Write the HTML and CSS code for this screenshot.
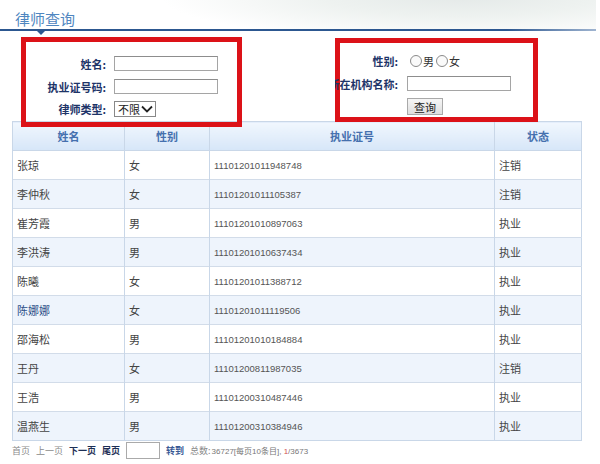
FILE: index.html
```html
<!DOCTYPE html>
<html lang="zh-CN">
<head>
    <meta charset="UTF-8">
    <title>律师查询</title>
    <link rel="stylesheet" href="styles.css">
</head>
<body>
    <div class="title-bar">
        <h1>律师查询</h1>
        <span class="marker"></span>
    </div>

    <div class="search">
        <div class="group group-left">
            <div class="row">
                <label>姓名:</label>
                <input type="text" class="text-input">
            </div>
            <div class="row">
                <label>执业证号码:</label>
                <input type="text" class="text-input">
            </div>
            <div class="row">
                <label>律师类型:</label>
                <span class="type-select">
                    <span>不限</span>
                    <svg width="12" height="8" viewBox="0 0 12 8"><path d="M1 1.5 L6 6.5 L11 1.5" fill="none" stroke="#222" stroke-width="1.8"/></svg>
                </span>
            </div>
        </div>
        <div class="group group-right">
            <div class="row">
                <label>性别:</label>
                <span class="radio"><i></i>男</span>
                <span class="radio"><i></i>女</span>
            </div>
            <div class="row">
                <label>所在机构名称:</label>
                <input type="text" class="text-input">
            </div>
            <div class="row">
                <label></label>
                <button class="btn">查询</button>
            </div>
        </div>
    </div>

    <table class="result">
        <thead>
            <tr>
                <th class="c-name">姓名</th>
                <th class="c-sex">性别</th>
                <th class="c-no">执业证号</th>
                <th class="c-state">状态</th>
            </tr>
        </thead>
        <tbody>
            <tr><td>张琼</td><td>女</td><td class="num">11101201011948748</td><td>注销</td></tr>
            <tr><td>李仲秋</td><td>女</td><td class="num">11101201011105387</td><td>注销</td></tr>
            <tr><td>崔芳霞</td><td>男</td><td class="num">11101201010897063</td><td>执业</td></tr>
            <tr><td>李洪涛</td><td>男</td><td class="num">11101201010637434</td><td>执业</td></tr>
            <tr><td>陈曦</td><td>女</td><td class="num">11101201011388712</td><td>执业</td></tr>
            <tr><td class="link">陈娜娜</td><td>女</td><td class="num">11101201011119506</td><td>执业</td></tr>
            <tr><td>邵海松</td><td>男</td><td class="num">11101201010184884</td><td>执业</td></tr>
            <tr><td>王丹</td><td>女</td><td class="num">11101200811987035</td><td>注销</td></tr>
            <tr><td>王浩</td><td>男</td><td class="num">11101200310487446</td><td>执业</td></tr>
            <tr><td>温燕生</td><td>男</td><td class="num">11101200310384946</td><td>执业</td></tr>
        </tbody>
    </table>

    <div class="pager">
        <span class="off">首页</span>
        <span class="off">上一页</span>
        <a class="on">下一页</a>
        <a class="on">尾页</a>
        <input type="text" class="page-input">
        <a class="go">转到</a>
        <span class="off total">总数:</span><span class="info">36727[每页10条目], <em>1</em>/3673</span>
    </div>
</body>
</html>
```

FILE: styles.css
```css
body {
    margin: 0;
    width: 600px;
    height: 464px;
    overflow: hidden;
    font-family: "Noto Sans CJK SC", "Liberation Sans", sans-serif;
    font-size: 11px;
    color: #444;
    background: #fff;
}

.title-bar {
    position: relative;
    height: 31px;
    padding-left: 15px;
    margin-right: 4px;
    background:
        radial-gradient(ellipse 300px 46px at 460px -4px, #e4e9e8 0%, #eef2f0 45%, rgba(255,255,255,0) 100%);
}

.title-bar::after {
    content: "";
    position: absolute;
    left: 0;
    right: 0;
    bottom: 0;
    height: 2px;
    background: linear-gradient(to right, #2c5790 0%, #2c5790 85%, #9fb4d0 100%);
}

.title-bar h1 {
    margin: 0;
    padding-top: 10px;
    font-size: 15px;
    font-weight: normal;
    line-height: 18px;
    color: #4f86c0;
}

.marker {
    position: absolute;
    left: 36px;
    bottom: -4px;
    border-left: 5px solid transparent;
    border-right: 5px solid transparent;
    border-top: 5px solid #2c5790;
}

.search {
    display: flex;
    align-items: flex-start;
    height: 90px;
}

/* red annotation frames sit above the table header */
.group {
    position: relative;
    z-index: 1;
    box-sizing: border-box;
    border: 5px solid #dc1218;
    clip-path: inset(0);
}

.group-left {
    margin: 6px 0 0 21px;
    width: 221px;
    height: 90px;
    padding-top: 10px;
}

.group-right {
    margin: 7px 0 0 93px;
    width: 203px;
    height: 84px;
    padding-top: 6px;
}

.row {
    display: flex;
    align-items: center;
    height: 23px;
}

.group-left .row:last-child {
    height: 22px;
}

.row label {
    display: flex;
    justify-content: flex-end;
    white-space: nowrap;
    flex-shrink: 0;
    font-weight: bold;
    color: #1d3468;
}

.group-left label {
    width: 80px;
    margin-right: 8px;
}

.group-right label {
    width: 58px;
    margin-right: 9px;
}

.text-input {
    box-sizing: border-box;
    width: 104px;
    height: 15px;
    margin: 0;
    padding: 0 2px;
    border: 1px solid #a5a5a5;
    border-top-color: #8d8d8d;
    font-size: 11px;
}

.type-select {
    box-sizing: border-box;
    display: inline-flex;
    align-items: center;
    justify-content: space-between;
    width: 42px;
    height: 16px;
    padding: 0 2px 0 3px;
    border: 1px solid #888;
    background: #fff;
    color: #222;
    font-size: 11px;
}

.radio {
    display: inline-flex;
    align-items: center;
    margin-left: 3px;
    color: #333;
}

.radio + .radio {
    margin-left: 2px;
}

.radio i {
    display: inline-block;
    width: 10px;
    height: 10px;
    border: 1px solid #8a8a8a;
    border-radius: 50%;
    margin-right: 1px;
    background: #fafafa;
}

.btn {
    box-sizing: border-box;
    width: 36px;
    height: 17px;
    padding: 0;
    border: 1px solid #a9a9a9;
    background: linear-gradient(#f6f6f6, #dedede);
    font-family: "Noto Sans CJK SC", sans-serif;
    font-size: 11px;
    color: #222;
    line-height: 14px;
}

.result {
    margin-left: 12px;
    width: 569px;
    border-collapse: collapse;
    table-layout: fixed;
    border: 1px solid #c9d7e8;
}

.result th {
    height: 29px;
    padding: 0;
    box-sizing: border-box;
    background: linear-gradient(#f1f7fe, #d6e6f8);
    color: #4570ae;
    font-weight: bold;
    border: 1px solid #c9d7e8;
}

.c-name { width: 112px; }
.c-sex { width: 85px; }
.c-no { width: 285px; }
.c-state { width: 87px; }

.result td {
    height: 28px;
    padding: 0 0 0 4px;
    border-top: 1px solid #d2dce9;
    border-left: 1px solid #c9d7e8;
    color: #444;
}

.result tbody tr:nth-child(even) td {
    background: #eef4fc;
}

.result td.num {
    font-family: "Liberation Sans", sans-serif;
    font-size: 9.5px;
    color: #555;
}

.result td.link {
    color: #2c4f88;
}

.pager {
    display: flex;
    align-items: center;
    height: 18px;
    padding-left: 12px;
    font-size: 9px;
}

.pager span, .pager a {
    margin-right: 6px;
}

.pager .off {
    color: #8a8a8a;
}

.pager .on {
    color: #1d2f55;
    font-weight: bold;
}

.pager .go {
    color: #3a5a95;
    font-weight: bold;
}

.pager .total {
    margin-right: 1px;
}

.page-input {
    box-sizing: border-box;
    width: 34px;
    height: 17px;
    margin: 0 6px 0 0;
    border: 1px solid #aaa;
}

.pager .info {
    font-family: "Liberation Sans", "Noto Sans CJK SC", sans-serif;
    font-size: 8px;
    color: #777;
}

.pager em {
    font-style: normal;
    color: #d25050;
}
```
